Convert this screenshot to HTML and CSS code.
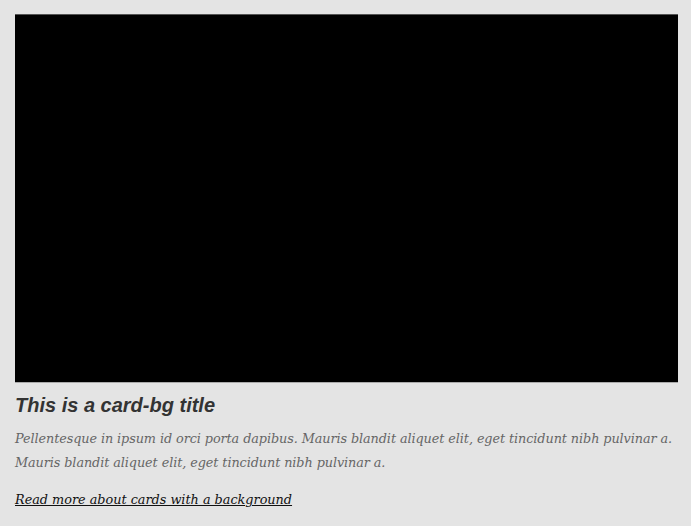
FILE: index.html
```
<!DOCTYPE html>
<html>
<head>
<meta charset="utf-8">
<link rel="stylesheet" href="styles.css">
</head>
<body>
<div class="card">
  <div class="card-media"></div>
  <h2 class="card-title">This is a card-bg title</h2>
  <p class="card-text">Pellentesque in ipsum id orci porta dapibus. Mauris blandit aliquet elit, eget tincidunt nibh pulvinar a. Mauris blandit aliquet elit, eget tincidunt nibh pulvinar a.</p>
  <a class="card-link" href="#">Read more about cards with a background</a>
</div>
</body>
</html>
```
FILE: styles.css
```
html, body {
  margin: 0;
  background: #e4e4e4;
}
.card {
  padding: 14px 13px 0 15px;
}
.card-media {
  height: 367px;
  background: #000;
  border-top: 1px solid #555;
  border-bottom: 1px solid #aaa;
}
.card-title {
  margin: 10px 0 0;
  font-family: "Liberation Sans", Arial, sans-serif;
  font-style: italic;
  font-weight: bold;
  font-size: 20px;
  line-height: 24px;
  color: #333;
}
.card-text {
  margin: 10px 0 0;
  font-family: "DejaVu Serif", Georgia, serif;
  font-style: italic;
  font-size: 12.8px;
  letter-spacing: -0.08px;
  line-height: 24px;
  color: #666;
}
.card-link {
  display: inline-block;
  margin-top: 13px;
  font-family: "DejaVu Serif", Georgia, serif;
  font-style: italic;
  font-size: 12.8px;
  line-height: 24px;
  color: #111;
}
```
